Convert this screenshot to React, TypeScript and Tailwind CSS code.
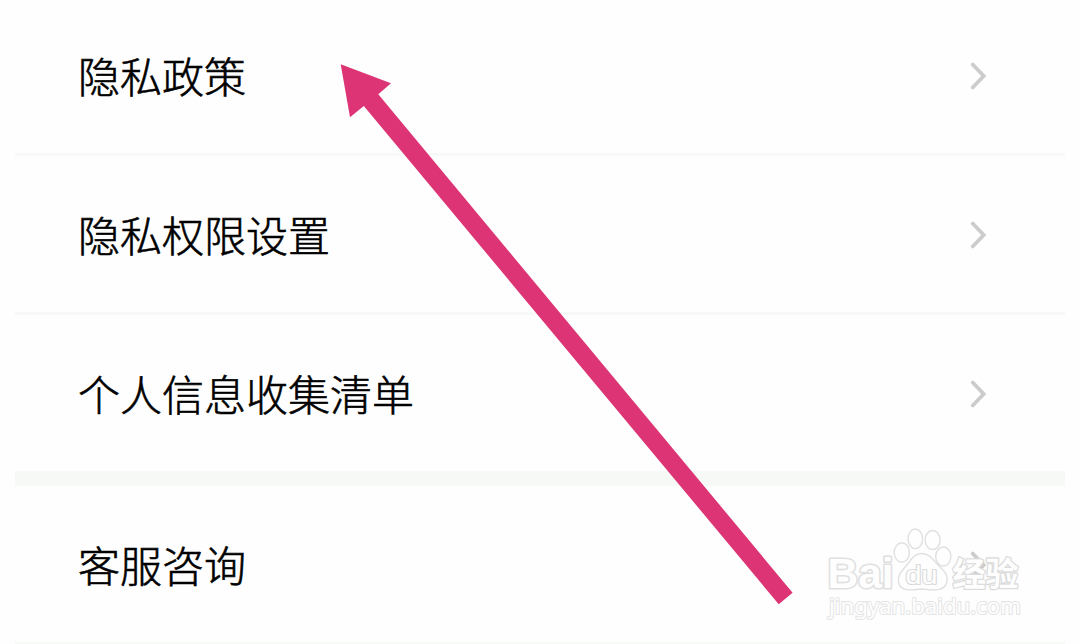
type Row = {
  title: string;
  className: string;
};

const rows: Row[] = [
  { title: "隐私政策", className: "border-b-[3px] -mt-[3px]" },
  { title: "隐私权限设置", className: "border-b-[3px]" },
  { title: "个人信息收集清单", className: "border-b-[15px]" },
  { title: "客服咨询", className: "border-b-[3px]" },
];

function Chevron() {
  return (
    <svg className="w-5 h-8 mt-0.5" viewBox="0 0 20 32" fill="none">
      <path d="M4.7 4.5 L15.7 16 L4.7 27.5" stroke="#cccccc" strokeWidth="3.8" strokeLinecap="round" />
    </svg>
  );
}

function Arrow() {
  return (
    <svg className="absolute left-[330px] top-[50px] w-[480px] h-[570px]" viewBox="330 50 480 570">
      <polygon
        points="340.7,64.3 391,83.3 378.3,94.3 792.6,592.7 778.7,604.2 363.8,106 350,117.3"
        fill="#dc3474"
      />
    </svg>
  );
}

function Watermark() {
  return (
    <svg
      className="absolute left-[810px] top-[510px] w-[230px] h-[134px] overflow-visible"
      viewBox="810 510 230 134"
      fill="#fefefe"
      stroke="#e0e0e0"
      strokeWidth="1.4"
      strokeLinejoin="round"
    >
      <text x="827.5" y="587.5" fontSize="42.5" textLength="66" lengthAdjust="spacingAndGlyphs" strokeWidth="3.2" className="font-['Liberation_Sans',sans-serif] font-bold [paint-order:stroke]">
        Bai
      </text>
      <ellipse cx="901.8" cy="552.5" rx="7.6" ry="9.8" />
      <ellipse cx="915.3" cy="538.8" rx="7.3" ry="9.8" />
      <ellipse cx="932.6" cy="540" rx="7.5" ry="9.5" />
      <ellipse cx="943.3" cy="556.5" rx="7.6" ry="9.5" />
      <path d="M922 553.5 C930 553.5 934 561 939 566 C944 571 949 575 946.5 583 C944 592 932 590 922 589 C912 590 901 592 898.5 583 C897 575 902 571 906 566 C911 560 914 553.5 922 553.5 Z" />
      <text x="905.5" y="583.5" fontSize="26" textLength="32" lengthAdjust="spacingAndGlyphs" strokeWidth="2.2" stroke="#dadada" className="font-['Liberation_Sans',sans-serif] [paint-order:stroke]">
        du
      </text>
      <text x="952.5" y="586" fontSize="33" strokeWidth="2.6" stroke="#dcdcdc" className="font-['Noto_Sans_CJK_SC',sans-serif] font-bold [paint-order:stroke]">
        经验
      </text>
      <text x="829" y="614" fontSize="22" textLength="192" lengthAdjust="spacingAndGlyphs" strokeWidth="2" stroke="#e4e4e4" className="font-['Noto_Sans',sans-serif] [paint-order:stroke]">
        jingyan.baidu.com
      </text>
    </svg>
  );
}

export default function App() {
  return (
    <div className="relative w-full h-[644px] overflow-hidden bg-[#fefefe] font-['Noto_Sans_CJK_SC',sans-serif]">
      <div className="flex flex-col px-[15px]">
        {rows.map((row) => (
          <div
            key={row.title}
            className={`flex h-[156px] box-content shrink-0 items-center justify-between pl-[63px] pr-[77px] border-[#f7f9f7] ${row.className}`}
          >
            <span className="text-[42px] leading-none text-black font-light [-webkit-text-stroke:0.6px_black]">{row.title}</span>
            <Chevron />
          </div>
        ))}
      </div>

      <Arrow />
      <Watermark />
    </div>
  );
}
